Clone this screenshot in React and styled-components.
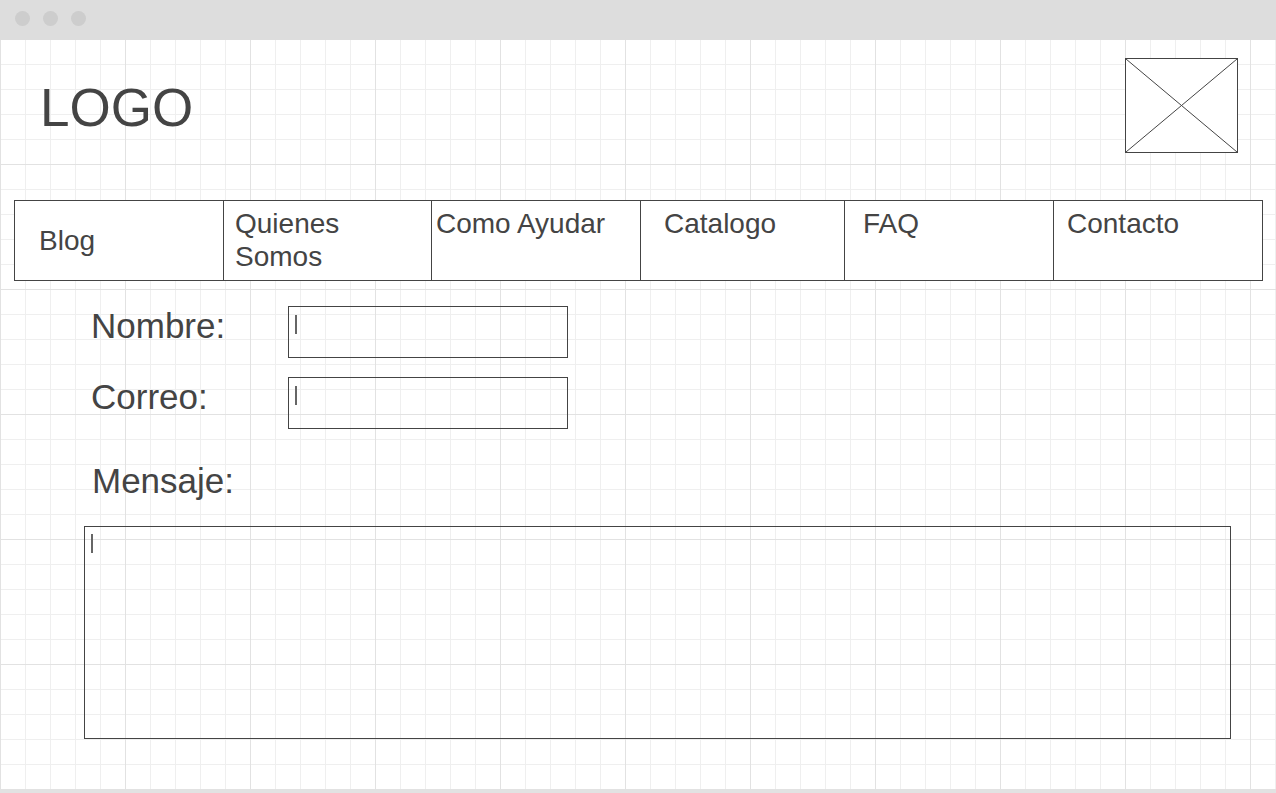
import styled, { createGlobalStyle } from 'styled-components'

const GlobalStyle = createGlobalStyle`
    html, body {
        margin : 0;
        padding : 0;
        background : #ffffff;
        font-family : "Liberation Sans", Arial, sans-serif;
        color : #444444;
    }
    * {
        box-sizing : border-box;
    }
`

const Window = styled.div`
    width : 1276px;
    height : 793px;
    display : flex;
    flex-direction : column;
    overflow : hidden;
`

const TitleBar = styled.div`
    height : 40px;
    flex-shrink : 0;
    background : #dddddd;
    display : flex;
    align-items : center;
    gap : 13px;
    padding-left : 15px;
    padding-bottom : 4px;
`

const Dot = styled.span`
    width : 15px;
    height : 15px;
    border-radius : 50%;
    background : #cdcdcd;
`

const Canvas = styled.main`
    flex : 1;
    padding : 0 13px 0 14px;
    border-bottom : 3px solid #e2e2e2;
    background-color : #ffffff;
    background-image :
        linear-gradient(to right, #e2e2e2 1px, transparent 1px),
        linear-gradient(to bottom, #e2e2e2 1px, transparent 1px),
        linear-gradient(to right, #efefef 1px, transparent 1px),
        linear-gradient(to bottom, #efefef 1px, transparent 1px);
    background-size : 125px 125px, 125px 125px, 25px 25px, 25px 25px;
    background-position : 0 -1px;
`

const Header = styled.header`
    height : 160px;
    display : flex;
    justify-content : space-between;
    align-items : flex-start;
`

const Logo = styled.h1`
    margin : 42px 0 0 26px;
    font-size : 53px;
    line-height : 52px;
    font-weight : normal;
    color : #444444;
`

const ImageBox = styled.div`
    width : 113px;
    height : 95px;
    margin : 18px 25px 0 0;
    border : 1px solid #444444;
    background : #ffffff;

    svg {
        display : block;
        width : 100%;
        height : 100%;
    }
`

const Nav = styled.nav`
    display : grid;
    grid-template-columns : 209px 208px 209px 204px 209px 1fr;
    height : 81px;
    border : 1px solid #444444;
    background : #ffffff;
`

const NavItem = styled.a`
    display : flex;
    align-items : ${p => p.$center ? 'center' : 'flex-start'};
    padding : ${p => p.$center ? '0' : '6px'} 4px 0 ${p => p.$pad}px;
    border-right : ${p => p.$last ? 'none' : '1px solid #444444'};
    font-size : 28px;
    line-height : 33px;
    color : #444444;
    text-decoration : none;
`

const Form = styled.form`
    display : flex;
    flex-direction : column;
    padding : 25px 0 0 70px;
`

const FieldRow = styled.div`
    display : flex;
    align-items : flex-start;
    margin-bottom : ${p => p.$gap}px;
`

const Label = styled.label`
    width : ${p => p.$width ? p.$width + 'px' : 'auto'};
    padding-left : ${p => p.$indent}px;
    font-size : 35px;
    line-height : 40px;
    color : #444444;
`

const InputBox = styled.div`
    width : 280px;
    height : 52px;
    border : 1px solid #444444;
    padding : 8px 0 0 6px;
`

const TextBox = styled.div`
    width : 1147px;
    height : 213px;
    margin-top : 25px;
    border : 1px solid #444444;
    padding : 7px 0 0 6px;
`

const Caret = styled.span`
    display : block;
    width : 2px;
    height : 19px;
    background : #666666;
`

const navItems = [
    { label : 'Blog', pad : 24, center : true },
    { label : <>Quienes<br />Somos</>, pad : 11 },
    { label : 'Como Ayudar', pad : 4 },
    { label : 'Catalogo', pad : 23 },
    { label : 'FAQ', pad : 18 },
    { label : 'Contacto', pad : 13, last : true },
]

export default function App(){

    return(
        <Window>
            <GlobalStyle />
            <TitleBar>
                <Dot /><Dot /><Dot />
            </TitleBar>
            <Canvas>
                <Header>
                    <Logo>LOGO</Logo>
                    <ImageBox>
                        <svg viewBox="0 0 111 93" preserveAspectRatio="none">
                            <line x1="0" y1="0" x2="111" y2="93" stroke="#444" strokeWidth="1" />
                            <line x1="111" y1="0" x2="0" y2="93" stroke="#444" strokeWidth="1" />
                        </svg>
                    </ImageBox>
                </Header>
                <Nav>
                    {navItems.map((item, i) => (
                        <NavItem key={i} $pad={item.pad} $center={item.center} $last={item.last}>
                            <span>{item.label}</span>
                        </NavItem>
                    ))}
                </Nav>
                <Form>
                    <FieldRow $gap={19}>
                        <Label $width={204} $indent={7}>Nombre:</Label>
                        <InputBox><Caret /></InputBox>
                    </FieldRow>
                    <FieldRow $gap={32}>
                        <Label $width={204} $indent={7}>Correo:</Label>
                        <InputBox><Caret /></InputBox>
                    </FieldRow>
                    <Label $indent={8}>Mensaje:</Label>
                    <TextBox><Caret /></TextBox>
                </Form>
            </Canvas>
        </Window>
    )
}
